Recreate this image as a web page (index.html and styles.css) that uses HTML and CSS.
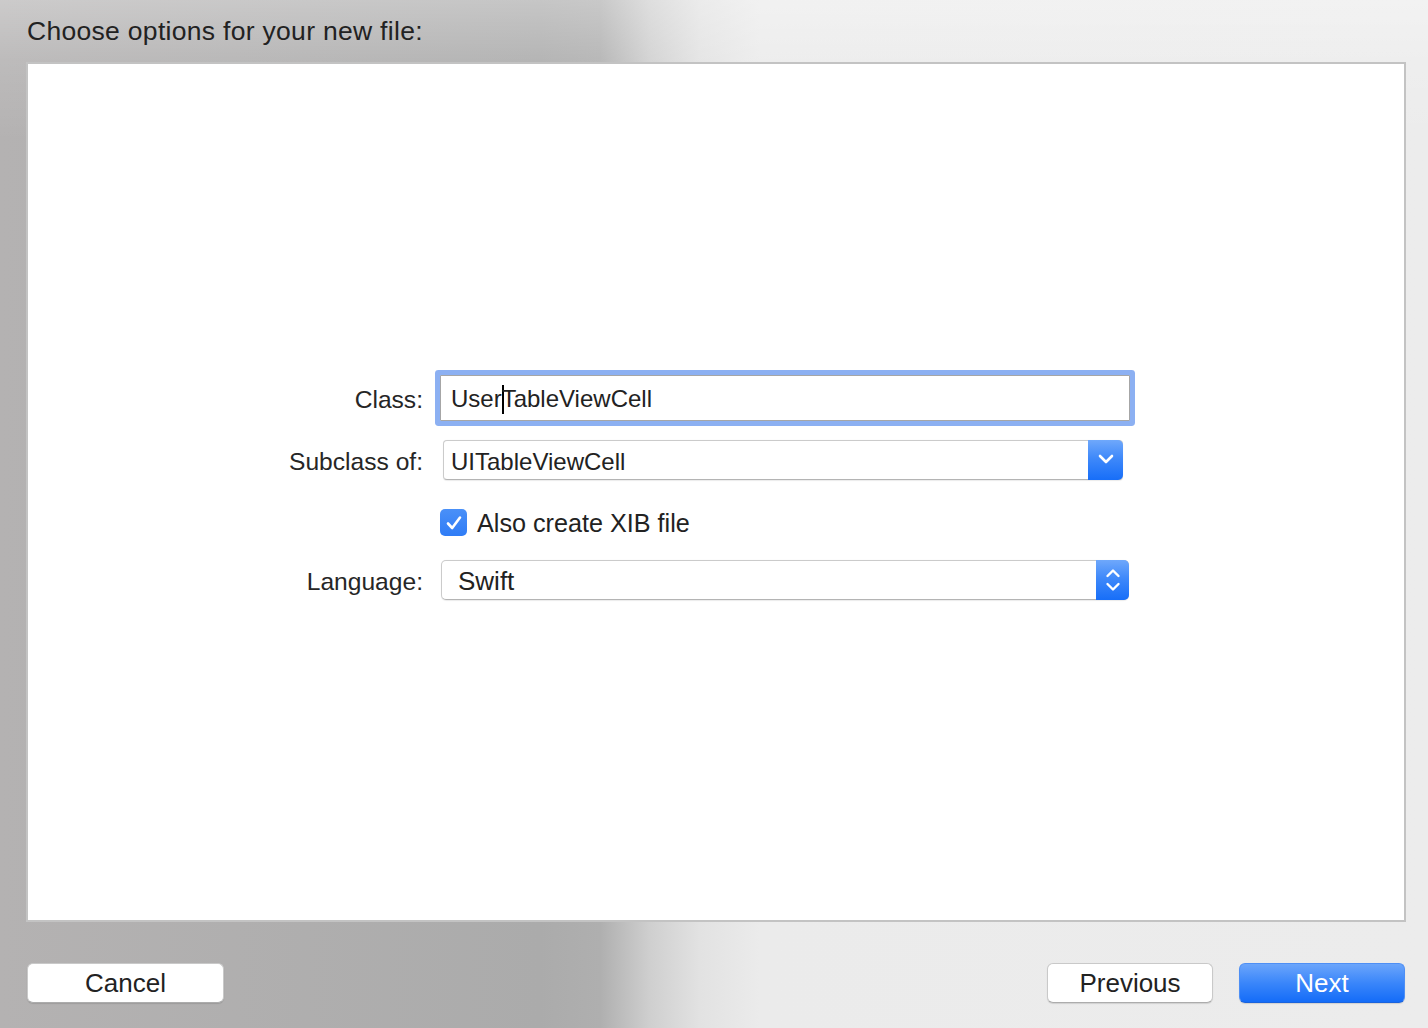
FILE: index.html
```html
<!DOCTYPE html>
<html>
<head>
<meta charset="utf-8">
<link rel="stylesheet" href="styles.css">
</head>
<body>
<div class="window">
  <header class="title">Choose options for your new file:</header>
  <main class="panel">
    <div class="form">
      <div class="row row-class">
        <label class="label">Class:</label>
        <div class="field"><span>User</span><span class="caret"></span><span>TableViewCell</span></div>
      </div>
      <div class="row row-sub">
        <label class="label">Subclass of:</label>
        <div class="popup popup-sub">
          <span class="popup-text">UITableViewCell</span>
          <span class="popup-btn">
            <svg width="18" height="12" viewBox="0 0 18 12"><path d="M3 3 L9 9 L15 3" fill="none" stroke="#fff" stroke-width="2.6" stroke-linecap="round" stroke-linejoin="round"/></svg>
          </span>
        </div>
      </div>
      <div class="row row-check">
        <span class="label"></span>
        <div class="check">
          <span class="box"><svg width="18" height="16" viewBox="0 0 18 16"><path d="M3 8.5 L7.2 13 L15 2.5" fill="none" stroke="#fff" stroke-width="2.6" stroke-linecap="round" stroke-linejoin="round"/></svg></span>
          <span class="check-text">Also create XIB file</span>
        </div>
      </div>
      <div class="row row-lang">
        <label class="label">Language:</label>
        <div class="popup popup-lang">
          <span class="popup-text">Swift</span>
          <span class="popup-btn stepper">
            <svg width="18" height="30" viewBox="0 0 18 30"><path d="M3.5 11 L9 5.5 L14.5 11" fill="none" stroke="#fff" stroke-width="2.4" stroke-linecap="round" stroke-linejoin="round"/><path d="M3.5 19 L9 24.5 L14.5 19" fill="none" stroke="#fff" stroke-width="2.4" stroke-linecap="round" stroke-linejoin="round"/></svg>
          </span>
        </div>
      </div>
    </div>
  </main>
  <footer class="footer">
    <button class="btn btn-cancel">Cancel</button>
    <div class="spacer"></div>
    <button class="btn btn-prev">Previous</button>
    <button class="btn btn-next">Next</button>
  </footer>
</div>
</body>
</html>
```
FILE: styles.css
```css
* { box-sizing: border-box; }
html, body {
  margin: 0;
  padding: 0;
  width: 1428px;
  height: 1028px;
  overflow: hidden;
}
body {
  font-family: "Liberation Sans", Arial, sans-serif;
  color: #242424;
  background:
    linear-gradient(to bottom, rgba(255,255,255,0.32) 0px, rgba(255,255,255,0.12) 60px, rgba(255,255,255,0) 140px),
    linear-gradient(90deg, #b4b2b2 0px, #ababab 540px, #afafaf 600px, #cfcfcf 650px, #e2e2e2 700px, #ebebeb 760px, #ececec 100%);
}
.window {
  display: flex;
  flex-direction: column;
  height: 1028px;
}
.title {
  height: 62px;
  padding: 14px 0 0 27px;
  font-size: 26.5px;
  line-height: 34px;
  color: #222;
  letter-spacing: 0.3px;
}
.panel {
  margin: 0 22px 0 26px;
  height: 860px;
  background: #fff;
  border: 2px solid #c3c3c3;
}
.form {
  padding-top: 311px;
  display: flex;
  flex-direction: column;
}
.row {
  display: flex;
  align-items: center;
}
.label {
  width: 395px;
  flex: none;
  text-align: right;
  font-size: 24.6px;
  color: #262626;
  margin-right: 13px;
  padding-top: 4px;
}
.row-class { height: 46px; }
.row-sub { height: 40px; margin-top: 19px; }
.row-check { height: 27px; margin-top: 29px; }
.row-lang { height: 40px; margin-top: 24px; }

.field {
  margin-left: 4px;
  width: 690px;
  height: 46px;
  border: 1px solid #a6a6a6;
  border-radius: 1px;
  box-shadow: 0 0 0 5px #8cb0f2;
  display: flex;
  align-items: center;
  padding-left: 10px;
  padding-top: 2px;
  font-size: 24px;
  color: #222;
  background: #fff;
}
.caret {
  display: inline-block;
  width: 0;
  height: 29px;
  border-left: 2px solid #000;
  margin-right: -2px;
}
.popup {
  display: flex;
  align-items: center;
  height: 40px;
  border: 1px solid #cbcbcb;
  border-bottom-color: #b4b4b4;
  border-radius: 4px;
  background: #fff;
  box-shadow: 0 0.5px 1px rgba(0,0,0,0.08);
}
.popup-sub { margin-left: 7px; width: 680px; }
.popup-lang { margin-left: 5px; width: 688px; border-radius: 5px; }
.popup-text {
  flex: 1;
  font-size: 24px;
  color: #222;
  padding-top: 3px;
}
.popup-sub .popup-text { padding-left: 7px; }
.popup-lang .popup-text { padding-left: 16px; font-size: 26px; padding-top: 2px; }
.popup-btn {
  width: 35px;
  height: 40px;
  margin: -1px -1px -1px 0;
  border-radius: 0 5px 5px 0;
  background: linear-gradient(to bottom, #6fa8fb 0%, #3f89fa 45%, #176ef8 100%);
  display: flex;
  align-items: center;
  justify-content: center;
}
.popup-sub .popup-btn svg { margin-top: -2px; }
.stepper { width: 33px; }

.check {
  margin-left: 4px;
  display: flex;
  align-items: center;
}
.box {
  width: 27px;
  height: 27px;
  border-radius: 5px;
  background: linear-gradient(to bottom, #4a90f8, #2f7cf6);
  display: flex;
  align-items: center;
  justify-content: center;
}
.check-text {
  margin-left: 10px;
  font-size: 25.2px;
  color: #222;
  padding-top: 2px;
}

.footer {
  flex: 1;
  display: flex;
  align-items: flex-start;
  padding: 41px 23px 0 27px;
}
.spacer { flex: 1; }
.btn {
  height: 40px;
  border-radius: 6px;
  font-family: "Liberation Sans", Arial, sans-serif;
  font-size: 26px;
  line-height: 38px;
  padding: 0;
  background: #fff;
  color: #222;
  border: 1px solid #c9c9c9;
  border-bottom-color: #acacac;
  box-shadow: 0 1px 1px rgba(0,0,0,0.12);
}
.btn-cancel { width: 197px; }
.btn-prev { width: 166px; }
.btn-next {
  width: 166px;
  margin-left: 26px;
  color: #fff;
  border: 1px solid #4e8ff5;
  border-bottom-color: #1a63dd;
  background: linear-gradient(to bottom, #6ba5fb 0%, #3a86fa 50%, #146cf8 100%);
}
```
